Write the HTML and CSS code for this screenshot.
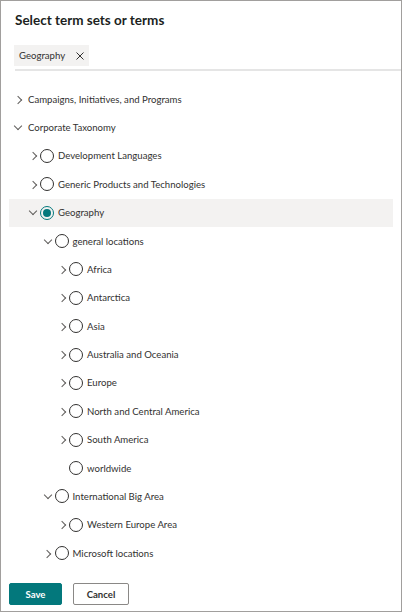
FILE: index.html
```html
<!DOCTYPE html>
<html>
<head>
<meta charset="utf-8">
<link rel="stylesheet" href="styles.css">
</head>
<body>
<div class="panel">
  <h1 class="title">Select term sets or terms</h1>
  <div class="chips">
    <span class="chip"><span class="chip-text">Geography</span><svg class="chip-x" width="8" height="8" viewBox="0 0 8 8"><path d="M0.5 0.5L7.5 7.5M7.5 0.5L0.5 7.5" stroke="#323130" stroke-width="1" fill="none"/></svg></span>
  </div>
  <div class="sep"></div>
  <ul class="tree">
    <li class="row l0"><span class="chev right"></span><span class="label">Campaigns, Initiatives, and Programs</span></li>
    <li class="row l0"><span class="chev down"></span><span class="label">Corporate Taxonomy</span></li>
    <li class="row l1"><span class="chev right"></span><span class="radio"></span><span class="label">Development Languages</span></li>
    <li class="row l1"><span class="chev right"></span><span class="radio"></span><span class="label">Generic Products and Technologies</span></li>
    <li class="row l1 selected"><span class="chev down"></span><span class="radio checked"></span><span class="label">Geography</span></li>
    <li class="row l2"><span class="chev down"></span><span class="radio"></span><span class="label">general locations</span></li>
    <li class="row l3"><span class="chev right"></span><span class="radio"></span><span class="label">Africa</span></li>
    <li class="row l3"><span class="chev right"></span><span class="radio"></span><span class="label">Antarctica</span></li>
    <li class="row l3"><span class="chev right"></span><span class="radio"></span><span class="label">Asia</span></li>
    <li class="row l3"><span class="chev right"></span><span class="radio"></span><span class="label">Australia and Oceania</span></li>
    <li class="row l3"><span class="chev right"></span><span class="radio"></span><span class="label">Europe</span></li>
    <li class="row l3"><span class="chev right"></span><span class="radio"></span><span class="label">North and Central America</span></li>
    <li class="row l3"><span class="chev right"></span><span class="radio"></span><span class="label">South America</span></li>
    <li class="row l3"><span class="chev none"></span><span class="radio"></span><span class="label">worldwide</span></li>
    <li class="row l2"><span class="chev down"></span><span class="radio"></span><span class="label">International Big Area</span></li>
    <li class="row l3"><span class="chev right"></span><span class="radio"></span><span class="label">Western Europe Area</span></li>
    <li class="row l2"><span class="chev right"></span><span class="radio"></span><span class="label">Microsoft locations</span></li>
  </ul>
  <div class="footer">
    <button class="btn primary">Save</button>
    <button class="btn">Cancel</button>
  </div>
</div>
</body>
</html>
```

FILE: styles.css
```css
* { box-sizing: border-box; }
html, body { margin: 0; padding: 0; background: #fff; }
body { font-family: "Lato", "Open Sans", sans-serif; color: #323130; }

.panel {
  width: 402px;
  height: 612px;
  border: 1px solid #a19f9d;
  background: #fff;
  display: flex;
  flex-direction: column;
  overflow: hidden;
}

.title {
  margin: 9px 0 0 14px;
  font-size: 13.5px;
  line-height: 20px;
  font-weight: 700;
  color: #201f1e;
}

.chips { margin: 15px 0 0 13px; display: flex; }
.chip {
  display: inline-flex;
  align-items: center;
  height: 21px;
  width: 75px;
  padding: 0 0 0 5px;
  background: #f3f2f1;
  font-size: 9.6px;
  color: #323130;
}
.chip-x { margin-left: 11px; flex: none; }

.sep { margin: 3px 0 0 14px; height: 2px; background: #e5e5e5; }

.tree { list-style: none; margin: 14px 8px 0 8px; padding: 0; }
.row {
  height: 28.375px;
  display: flex;
  align-items: center;
  font-size: 9.6px;
}
.row.selected { background: #f3f2f1; }
.l0 { padding-left: 3px; }
.l1 { padding-left: 18px; }
.l2 { padding-left: 32.5px; }
.l3 { padding-left: 47px; }

.chev { width: 12px; height: 12px; flex: none; position: relative; }
.chev.right::before {
  content: "";
  position: absolute;
  left: 2.5px; top: 3.5px;
  width: 5px; height: 5px;
  border-right: 1px solid #605e5c;
  border-top: 1px solid #605e5c;
  transform: rotate(45deg);
}
.chev.down::before {
  content: "";
  position: absolute;
  left: 3px; top: 1.5px;
  width: 5px; height: 5px;
  border-right: 1px solid #605e5c;
  border-bottom: 1px solid #605e5c;
  transform: rotate(45deg);
}

.radio {
  width: 14px; height: 14px;
  margin-left: 1px;
  border: 1px solid #323130;
  border-radius: 50%;
  flex: none;
  position: relative;
}
.radio.checked { border-color: #03787c; }
.radio.checked::after {
  content: "";
  position: absolute;
  left: 2px; top: 2px;
  width: 8px; height: 8px;
  border-radius: 50%;
  background: #03787c;
}
.label { margin-left: 4px; white-space: nowrap; }

.footer { margin: auto 0 6px 8px; display: flex; gap: 11px; }
.btn {
  height: 22px;
  padding: 0;
  font-family: inherit;
  font-size: 9.6px;
  font-weight: 700;
  border: 1px solid #8a8886;
  background: #fff;
  color: #323130;
  border-radius: 2px;
  width: 56px;
}
.btn.primary {
  width: 53px;
  background: #03787c;
  border-color: #03787c;
  color: #fff;
}
```
